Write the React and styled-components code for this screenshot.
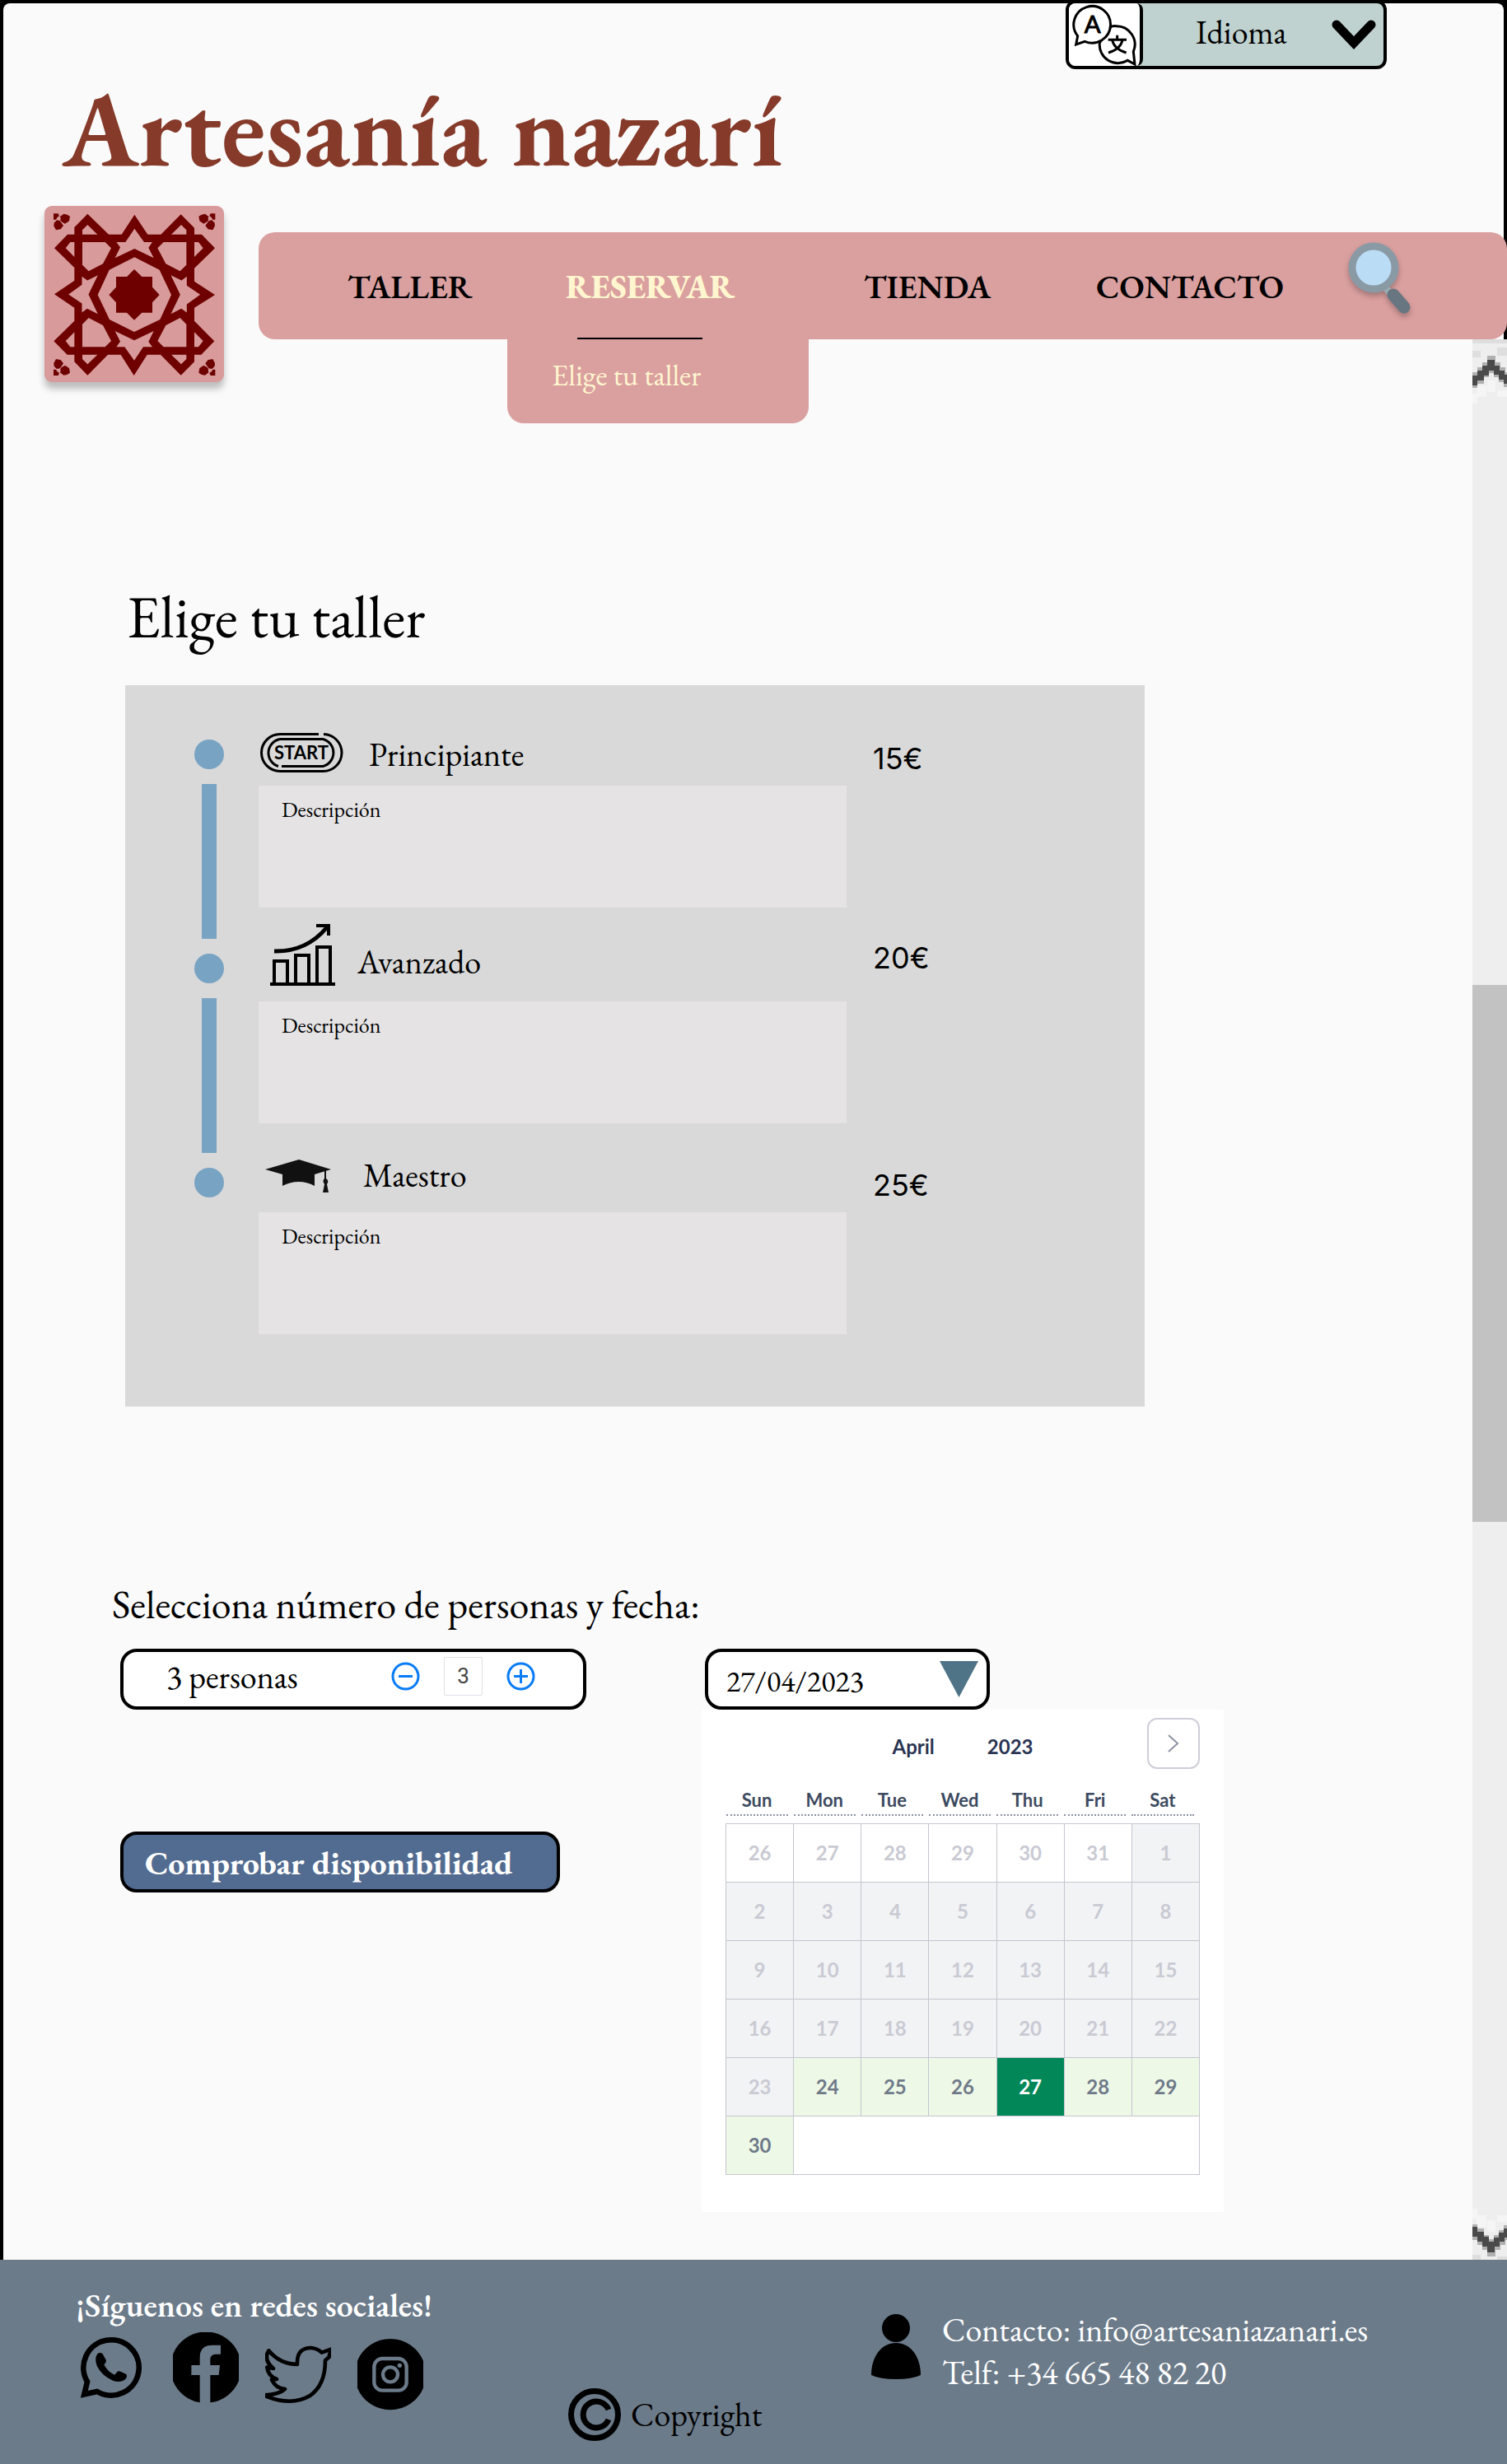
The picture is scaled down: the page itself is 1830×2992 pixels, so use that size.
import React, { useState } from "react";
import styled, { createGlobalStyle } from "styled-components";

const serif = `"EB Garamond", "Liberation Serif", serif`;
const sans = `Inter, "Liberation Sans", sans-serif`;
const geometric = `Lato, "Liberation Sans", sans-serif`;

const GlobalStyle = createGlobalStyle`
  *, *::before, *::after { box-sizing: border-box; }
  body { margin: 0; background: #000; color: #000; font-family: ${serif}; font-size: 40px; }
  h1, h2, p, ul { margin: 0; padding: 0; font-weight: 400; }
  ul { list-style: none; }
  a { color: inherit; text-decoration: none; }
  button, input, select { font: inherit; color: inherit; }
  svg { display: block; flex: none; }
`;

const Sheet = styled.div`
  display: flex;
  flex-direction: column;
  min-height: 100vh;
`;

/* ---------- Header ---------- */

const Header = styled.header`
  position: relative;
  z-index: 1;
  display: flex;
  flex-direction: column;
  margin: 4px 4px 0;
  background: #fafafa;
  border-radius: 8px 8px 0 0;
`;

const LanguagePicker = styled.label`
  align-self: flex-end;
  display: flex;
  width: 390px;
  height: 84px;
  margin: -4px 142px 0 0;
  border: 4px solid #000;
  border-radius: 12px;
  background: #bfd2d0;
  overflow: hidden;
`;

const LanguageBadge = styled.span`
  flex: none;
  width: 90px;
  background: #fff;
  border-right: 4px solid #000;
  border-radius: 0 8px 8px 0;
`;

const LanguageField = styled.span`
  flex: 1;
  display: grid;
  align-items: center;
  justify-items: end;
  > * { grid-area: 1 / 1; }
  svg { margin-right: 8px; pointer-events: none; }
`;

const LanguageSelect = styled.select`
  appearance: none;
  width: 100%;
  height: 100%;
  padding: 0 0 6px 64px;
  border: 0;
  background: transparent;
`;

const SiteTitle = styled.h1`
  margin-top: 12px;
  padding-left: 72px;
  color: #863a2a;
  font-size: 128px;
  line-height: 120px;
  font-weight: 700;
`;

const HeaderRow = styled.div`
  display: flex;
  align-items: flex-start;
  gap: 42px;
  margin: 34px -4px 0 50px;
`;

const LogoLink = styled.a`
  flex: none;
  width: 218px;
  height: 214px;
  margin-bottom: -52px;
  border-radius: 9px;
  background: #d89a9a;
  box-shadow: 0 8px 8px rgba(0, 0, 0, 0.25);
`;

const Nav = styled.nav`
  flex: 1;
  height: 130px;
  margin-top: 32px;
  padding-left: 108px;
  background: #da9f9f;
  border-radius: 20px;
`;

const NavList = styled.ul`
  display: grid;
  grid-template-columns: 265fr 362fr 282fr 305fr 194fr;
  height: 100%;
`;

const NavItem = styled.li`
  position: relative;
  display: flex;
  align-items: center;
  padding-top: 2px;
  font-weight: ${(p) => (p.$current ? 800 : 600)};
  color: ${(p) => (p.$current ? "#fff6cf" : "#000")};
`;

const CurrentMark = styled.span`
  position: absolute;
  left: 14px;
  bottom: 0;
  width: 152px;
  height: 2px;
  background: #000;
`;

const SubMenu = styled.ul`
  position: absolute;
  top: 100%;
  left: -71px;
  z-index: 2;
  width: 366px;
  height: 102px;
  padding: 22px 54px;
  border-radius: 0 0 20px 20px;
  background: #da9f9f;
  font-size: 36px;
  line-height: 44px;
  font-weight: 400;
`;

const SearchButton = styled.button`
  padding: 0;
  border: 0;
  background: none;
  align-self: flex-start;
  margin-top: 10px;
  filter: drop-shadow(0 4px 3px rgba(0, 0, 0, 0.25));
`;

/* ---------- Main ---------- */

const Body = styled.div`
  flex: 1;
  display: flex;
  padding-left: 4px;
`;

const Content = styled.main`
  flex: 1;
  padding: 296px 0 58px;
  background: #fafafa;
`;

const SectionTitle = styled.h2`
  padding-left: 150px;
  font-size: 72px;
  line-height: 80px;
`;

const Panel = styled.div`
  display: grid;
  grid-template-columns: 36px minmax(0, 1fr) 330px;
  margin: 44px 398px 0 148px;
  padding: 48px 0 88px 84px;
  background: #d9d9d9;
`;

const Timeline = styled.div`
  display: flex;
  flex-direction: column;
  align-items: center;
  gap: 18px;
  padding-top: 18px;
`;

const Dot = styled.span`
  width: 36px;
  height: 36px;
  border-radius: 50%;
  background: #79a3c3;
`;

const Bar = styled.span`
  width: 18px;
  height: 188px;
  background: #79a3c3;
`;

const Levels = styled.ul`
  display: flex;
  flex-direction: column;
  gap: 20px;
  padding: 0 32px 0 42px;
`;

const LevelHead = styled.div`
  display: flex;
  align-items: center;
`;

const LevelName = styled.span`
  padding-bottom: 2px;
`;

const Description = styled.p`
  height: 148px;
  padding: 12px 28px;
  background: #e5e3e4;
  font-size: 26px;
  line-height: 34px;
`;

const Prices = styled.ul`
  display: grid;
  grid-template-rows: 242px 276px auto;
  align-content: start;
  padding-top: 18px;
  font-family: ${sans};
  font-size: 36px;
  line-height: 46px;
`;

const BookingTitle = styled.h2`
  margin-top: 214px;
  padding-left: 132px;
  font-size: 48px;
  line-height: 52px;
`;

const Booking = styled.form`
  display: grid;
  grid-template-columns: 566px 634px;
  column-gap: 140px;
  margin-top: 28px;
  padding-left: 142px;
`;

const BookingColumn = styled.div`
  display: flex;
  flex-direction: column;
  align-items: flex-start;
  gap: ${(p) => p.$gap}px;
`;

const Field = styled.div`
  display: flex;
  align-items: center;
  width: ${(p) => p.$width}px;
  height: 74px;
  margin-left: ${(p) => (p.$inset ? 4 : 0)}px;
  padding: ${(p) => p.$padding};
  border: 4px solid #000;
  border-radius: 20px;
  background: #fff;
`;

const PeopleLabel = styled.label`
  flex: 1;
  padding-bottom: 6px;
`;

const Stepper = styled.div`
  display: flex;
  align-items: center;
  gap: 29px;
  padding-bottom: 8px;
`;

const IconButton = styled.button`
  padding: 0;
  border: 0;
  background: none;
`;

const CountInput = styled.input`
  width: 47px;
  height: 47px;
  padding: 0;
  border: 1px solid #dfe1e5;
  border-radius: 2px;
  background: #fff;
  color: #444;
  font-family: Roboto, sans-serif;
  font-size: 26px;
  text-align: center;
`;

const DateInput = styled.input`
  flex: 1;
  min-width: 0;
  height: 100%;
  padding: 4px 0 0;
  border: 0;
  background: transparent;
  font-size: 36px;
`;

const SubmitButton = styled.button`
  width: 534px;
  height: 74px;
  padding: 2px 26px 0;
  border: 4px solid #000;
  border-radius: 20px;
  background: #526b90;
  color: #fff;
  font-weight: 700;
  text-align: left;
`;

const Calendar = styled.section`
  width: 100%;
  padding: 10px 29px 45px;
  background: #fff;
  font-family: ${geometric};
  font-size: 24px;
`;

const CalendarHead = styled.div`
  display: grid;
  grid-template-columns: 1fr auto auto 1fr;
  column-gap: 64px;
  height: 64px;
  color: #2a3553;
  font-weight: 700;
  line-height: 70px;
  > :first-child { grid-column: 2; }
`;

const NextButton = styled.button`
  justify-self: end;
  display: grid;
  place-items: center;
  width: 64px;
  height: 62px;
  padding: 0;
  border: 2px solid #cdced8;
  border-radius: 12px;
  background: #fff;
`;

const Month = styled.table`
  width: 100%;
  table-layout: fixed;
  border-collapse: collapse;
  text-align: center;
`;

const Weekday = styled.th`
  height: 64px;
  padding: 0 7px 9px 0;
  color: #3c4a60;
  font-size: 22px;
  font-weight: 700;
  span {
    display: block;
    height: 55px;
    padding-top: 10px;
    line-height: 52px;
    border-bottom: 2px dotted #8b92a3;
  }
`;

const dayTones = {
  out: { background: "#ffffff", color: "#c9cad3" },
  past: { background: "#f2f3f5", color: "#c9cad3" },
  open: { background: "#eef8e7", color: "#6f7a89" },
  chosen: { background: "#028758", color: "#ffffff" },
};

const Day = styled.td`
  height: 71px;
  padding: 0;
  border: 1px solid #c5c6cf;
  background: ${(p) => dayTones[p.$tone].background};
  color: ${(p) => dayTones[p.$tone].color};
  font-weight: 700;
  line-height: 30px;
`;

const ScrollTrack = styled.div`
  flex: none;
  display: flex;
  flex-direction: column;
  width: 42px;
  background: #eeeeee;
`;

const ScrollThumb = styled.div`
  height: 652px;
  margin-top: 694px;
  margin-bottom: auto;
  background: #c2c2c2;
`;

/* ---------- Footer ---------- */

const Footer = styled.footer`
  display: grid;
  grid-template-columns: 598fr 368fr 772fr;
  height: 248px;
  padding: 33px 0 28px 92px;
  background: #6c7b8a;
`;

const SocialTitle = styled.h2`
  color: #fff;
  font-size: 40px;
  line-height: 44px;
  font-weight: 600;
`;

const SocialList = styled.ul`
  display: flex;
  gap: 32px;
  margin-top: 11px;
  padding-left: 6px;
`;

const Copyright = styled.p`
  align-self: end;
  display: flex;
  align-items: center;
  gap: 12px;
`;

const Contact = styled.address`
  display: flex;
  align-items: flex-start;
  gap: 26px;
  padding-top: 26px;
  color: #fff;
  font-style: normal;
  line-height: 52px;
  svg { margin-top: 7px; }
`;

/* ---------- Drawings ---------- */

const flips = ["", "translate(739 0) scale(-1 1)", "translate(0 706) scale(1 -1)", "translate(739 706) scale(-1 -1)"];

const TileLogo = () => (
  <svg width="218" height="214" viewBox="42 30 654 642" role="img" aria-label="Artesanía nazarí">
    <path
      fill="#6e0000"
      d="M199 59 276 134H323L370 62 418 134H466L539 61 588 110V134H615L663 184 588 257V305L663 354 588 401V449L661 523 613 572H588V598L539 647 465 572H416L368 648 320 572H273L199 647 151 598V572H125L76 523 151 449V401L78 352 151 302V255L78 184 126 134H151V108Z"
    />
    <g fill="#d89a9a">
      {flips.map((t) => (
        <g key={t} transform={t}>
          <path d="M180 134V118L199 99 235 134ZM151 162H136L119 184 151 216ZM180 162H263L285 184 255 241 203 268 180 245Z" />
        </g>
      ))}
      {[0, 90, 180, 270].map((a) => (
        <path
          key={a}
          transform={`rotate(${a} 369.5 353)`}
          d="M370 113 405 162H435L421 182 440 220 370 186 299 220 318 181 304 162H337Z"
        />
      ))}
      <path d="M370 217 461 263 504 354 463 444 369 489 279 444 236 354 278 263Z" />
    </g>
    <path fill="#6e0000" d="M303 288H342L369 261 397 288H435V326L461 354 435 382V419H397L369 446 342 419H303V382L277 354 303 326Z" />
    {flips.map((t) => (
      <g key={t} transform={t} fill="#6e0000">
        <path d="M75 58H92L96 67 88 73 84 80H75ZM99 69 112 59Q126 60 135 68L132 85 117 95 104 88 97 77ZM87 82 98 84 104 92 111 102 101 115 84 118 76 103 77 92Z" />
        <circle cx="95" cy="76" r="6" fill="#d89a9a" />
      </g>
    ))}
  </svg>
);

const TranslateIcon = () => (
  <svg width="86" height="76" viewBox="24 12 258 228" aria-hidden="true">
    <g fill="#fff" stroke="#000" strokeWidth="9" strokeLinejoin="miter">
      <path d="M179 96A67 67 0 0 1 196 95 67 67 0 0 1 259 188L264 234 238 220A67 67 0 0 1 136 156Z" />
      <path d="M50 162 56 131A67 67 0 1 1 82 151Z" />
    </g>
    <text x="110" y="120" textAnchor="middle" fontFamily="Lato, sans-serif" fontSize="88" stroke="#000" strokeWidth="3">A</text>
    <g fill="none" stroke="#000" strokeWidth="9">
      <path d="M167 145H234M200 128V145M182 147Q190 180 233 192M219 147Q211 180 168 192" />
    </g>
  </svg>
);

const ChevronDown = () => (
  <svg width="56" height="38" viewBox="0 0 56 38" aria-hidden="true">
    <path d="M7 7 28 29 49 7" fill="none" stroke="#000" strokeWidth="11" strokeLinecap="round" />
  </svg>
);

const SearchIcon = () => (
  <svg width="78" height="88" viewBox="0 0 78 88" aria-hidden="true">
    <path d="M45 54 54 64" stroke="#9aaab2" strokeWidth="8" />
    <path d="M56 64 69 79" stroke="#677681" strokeWidth="15" strokeLinecap="round" />
    <circle cx="32" cy="31" r="26" fill="#bbdcf5" stroke="#8a9aa5" strokeWidth="9" />
  </svg>
);

const StartIcon = () => (
  <svg width="134" height="74" viewBox="0 0 134 74" aria-hidden="true">
    <g fill="none" stroke="#000" strokeWidth="3">
      <path d="M73 11.500H26A22.500 22.500 0 0 0 26 56.500H78A22.500 22.500 0 0 0 79 11.500" />
      <path d="M28 50.500H78A17 17 0 0 0 78 17.500H26A17 17 0 0 0 24 50.500" />
    </g>
    <text x="52" y="42" textAnchor="middle" fontFamily="Lato, sans-serif" fontWeight="700" fontSize="22">START</text>
  </svg>
);

const GrowthIcon = () => (
  <svg width="120" height="94" viewBox="0 0 120 94" aria-hidden="true">
    <path d="M14 73H93" stroke="#000" strokeWidth="4" />
    <g fill="none" stroke="#000" strokeWidth="4">
      <path d="M19 72V45H35V72M45 72V38H61V72M71 72V28H87V72" />
      <path d="M19 33Q58 34 83 4" strokeWidth="5" />
      <path d="M70 2H85V14" />
    </g>
  </svg>
);

const CapIcon = () => (
  <svg width="127" height="88" viewBox="0 0 127 88" aria-hidden="true" fill="#111">
    <path d="M8 36 49 24 88 36 68 42V56Q49 46 29 56V42Z" />
    <path d="M80 38H82V47Q86 50 83 54L85 64H78L80 54Q77 50 80 47Z" />
  </svg>
);

const StepIcon = ({ plus }) => (
  <svg width="35" height="35" viewBox="0 0 35 35" fill="none" stroke="#0a7cf5" strokeWidth="3" aria-hidden="true">
    <circle cx="17.500" cy="17.500" r="15.500" />
    <path d={plus ? "M9 17.500H26M17.500 9V26" : "M9 17.500H26"} />
  </svg>
);

const Triangle = () => (
  <svg width="47" height="44" viewBox="0 0 47 44" aria-hidden="true">
    <path d="M0 0H47L23.500 44Z" fill="#4f7387" />
  </svg>
);

const ScrollArrow = ({ down }) => (
  <svg width="42" height="90" viewBox="0 0 42 90" aria-hidden="true" shapeRendering="crispEdges">
    <g transform={down ? "translate(0 106) scale(1 -1)" : undefined}>
      <path fill="#dedede" d="M0 0H42V5H0ZM0 14H10V22H0ZM30 10H42V20H30Z" />
      <path fill="#f5f5f5" d="M5 56H17V70H5ZM18 50H28V64H18ZM0 66H6V78H0ZM30 62H42V70H30Z" />
      <path fill="#b0b0b0" d="M0 40H6V34H12V28H18V20H28V28H34V34H40V40H42V58H38V52H32V46H26V41H20V46H14V54H6V59H0Z" />
      <path fill="#4a4a4a" d="M0 44H6V38H12V32H18V25H27V32H33V38H39V43H42V54H38V49H32V43H26V38H20V44H14V50H6V56H0Z" />
    </g>
  </svg>
);

const WhatsAppIcon = () => (
  <svg width="80" height="94" viewBox="24 36 240 282" aria-hidden="true">
    <path d="M37 262 48 216A101 101 0 1 1 84 252Z" fill="none" stroke="#000" strokeWidth="20" />
    <path d="M85 115Q92 108 103 113L117 139Q117 147 109 154 122 180 147 191L160 178Q165 176 191 190 195 202 182 211 165 221 141 212 100 194 83 158 73 131 85 115Z" />
  </svg>
);

const FacebookIcon = () => (
  <svg width="80" height="94" viewBox="360 36 240 282" aria-hidden="true">
    <path d="M458 292A129 129 0 0 1 360 213V116A129 129 0 0 1 600 116V213A129 129 0 0 1 496 292V192H527L531 156H496V136Q496 116 516 116H534V83H505Q458 83 458 128V156H427V192H458Z" />
  </svg>
);

const TwitterIcon = () => (
  <svg width="80" height="94" viewBox="696 36 240 282" aria-hidden="true">
    <path
      d="M709 103Q750 153 813 153 810 92 864 93 886 95 902 110L938 97 930 118 938 118 915 139Q915 230 858 268 790 308 690 265 745 264 768 243 735 240 720 209L738 207Q706 194 703 164L726 168Q688 136 709 103Z"
      fill="none"
      stroke="#000"
      strokeWidth="14"
      strokeLinejoin="round"
    />
  </svg>
);

const InstagramIcon = () => (
  <svg width="80" height="95" viewBox="1032 36 240 285" aria-hidden="true">
    <path d="M1032 140A130 130 0 0 1 1272 140V239A130 130 0 0 1 1032 239Z" />
    <g fill="none" stroke="#6c7b8a" strokeWidth="13">
      <rect x="1093" y="132" width="118" height="116" rx="30" />
      <circle cx="1152" cy="190" r="27" />
    </g>
    <circle cx="1186" cy="157" r="8" fill="#6c7b8a" />
  </svg>
);

const CopyrightIcon = () => (
  <svg width="64" height="64" viewBox="0 0 64 64" fill="none" stroke="#000" aria-hidden="true">
    <circle cx="32" cy="32" r="28.500" strokeWidth="7" />
    <path d="M49 26A16 16 0 1 0 49 38" strokeWidth="7" />
  </svg>
);

const PersonIcon = () => (
  <svg width="60" height="79" viewBox="0 0 60 79" aria-hidden="true">
    <circle cx="30" cy="17" r="17" />
    <path d="M30 35C48 35 60 52 60 74Q50 79 30 79T0 74C0 52 12 35 30 35Z" />
  </svg>
);

/* ---------- Data ---------- */

const levels = [
  { name: "Principiante", price: "15€", Icon: StartIcon },
  { name: "Avanzado", price: "20€", Icon: GrowthIcon },
  { name: "Maestro", price: "25€", Icon: CapIcon },
];

const socials = [
  { name: "WhatsApp", Icon: WhatsAppIcon },
  { name: "Facebook", Icon: FacebookIcon },
  { name: "Twitter", Icon: TwitterIcon },
  { name: "Instagram", Icon: InstagramIcon },
];

const weekdays = ["Sun", "Mon", "Tue", "Wed", "Thu", "Fri", "Sat"];

const leading = [26, 27, 28, 29, 30, 31].map((day) => ({ day, tone: "out" }));
const april = Array.from({ length: 30 }, (_, i) => {
  const day = i + 1;
  return { day, tone: day === 27 ? "chosen" : day < 24 ? "past" : "open" };
});
const days = [...leading, ...april];
const weeks = Array.from({ length: 6 }, (_, i) => days.slice(i * 7, i * 7 + 7));

export default function App() {
  const [people, setPeople] = useState(3);

  return (
    <Sheet>
      <GlobalStyle />
      <Header>
        <LanguagePicker>
          <LanguageBadge>
            <TranslateIcon />
          </LanguageBadge>
          <LanguageField>
            <LanguageSelect aria-label="Idioma">
              <option>Idioma</option>
            </LanguageSelect>
            <ChevronDown />
          </LanguageField>
        </LanguagePicker>
        <SiteTitle>Artesanía nazarí</SiteTitle>
        <HeaderRow>
          <LogoLink href="#inicio">
            <TileLogo />
          </LogoLink>
          <Nav>
            <NavList>
              <NavItem><a href="#taller">TALLER</a></NavItem>
              <NavItem $current>
                <a href="#reservar">RESERVAR</a>
                <CurrentMark />
                <SubMenu>
                  <li><a href="#elige">Elige tu taller</a></li>
                </SubMenu>
              </NavItem>
              <NavItem><a href="#tienda">TIENDA</a></NavItem>
              <NavItem><a href="#contacto">CONTACTO</a></NavItem>
              <NavItem>
                <SearchButton type="button" aria-label="Buscar">
                  <SearchIcon />
                </SearchButton>
              </NavItem>
            </NavList>
          </Nav>
        </HeaderRow>
      </Header>

      <Body>
        <Content>
          <SectionTitle id="elige">Elige tu taller</SectionTitle>
          <Panel>
            <Timeline>
              <Dot />
              <Bar />
              <Dot />
              <Bar />
              <Dot />
            </Timeline>
            <Levels>
              {levels.map(({ name, Icon }) => (
                <li key={name}>
                  <LevelHead>
                    <Icon />
                    <LevelName>{name}</LevelName>
                  </LevelHead>
                  <Description>Descripción</Description>
                </li>
              ))}
            </Levels>
            <Prices>
              {levels.map(({ name, price }) => (
                <li key={name}>{price}</li>
              ))}
            </Prices>
          </Panel>

          <BookingTitle>Selecciona número de personas y fecha:</BookingTitle>
          <Booking onSubmit={(e) => e.preventDefault()}>
            <BookingColumn $gap={148}>
              <Field $width={566} $padding="0 58px 0 52px">
                <PeopleLabel htmlFor="people">{people} personas</PeopleLabel>
                <Stepper>
                  <IconButton type="button" aria-label="Menos" onClick={() => setPeople(Math.max(1, people - 1))}>
                    <StepIcon />
                  </IconButton>
                  <CountInput id="people" value={people} readOnly />
                  <IconButton type="button" aria-label="Más" onClick={() => setPeople(people + 1)}>
                    <StepIcon plus />
                  </IconButton>
                </Stepper>
              </Field>
              <SubmitButton type="submit">Comprobar disponibilidad</SubmitButton>
            </BookingColumn>

            <BookingColumn $gap={0}>
              <Field $width={346} $inset $padding="0 10px 0 22px">
                <DateInput aria-label="Fecha" defaultValue="27/04/2023" />
                <IconButton type="button" aria-label="Abrir calendario">
                  <Triangle />
                </IconButton>
              </Field>
              <Calendar>
                <CalendarHead>
                  <span>April</span>
                  <span>2023</span>
                  <NextButton type="button" aria-label="Next">
                    <svg width="16" height="24" viewBox="0 0 16 24" fill="none" stroke="#8d93a5" strokeWidth="2">
                      <path d="M2 2 13 12 2 22" />
                    </svg>
                  </NextButton>
                </CalendarHead>
                <Month>
                  <thead>
                    <tr>
                      {weekdays.map((d) => (
                        <Weekday key={d} scope="col"><span>{d}</span></Weekday>
                      ))}
                    </tr>
                  </thead>
                  <tbody>
                    {weeks.map((week, i) => (
                      <tr key={i}>
                        {week.map(({ day, tone }) => (
                          <Day key={day} $tone={tone}>{day}</Day>
                        ))}
                        {week.length < 7 && <Day $tone="out" colSpan={7 - week.length} />}
                      </tr>
                    ))}
                  </tbody>
                </Month>
              </Calendar>
            </BookingColumn>
          </Booking>
        </Content>
        <ScrollTrack aria-hidden="true">
          <ScrollArrow />
          <ScrollThumb />
          <ScrollArrow down />
        </ScrollTrack>
      </Body>

      <Footer>
        <div>
          <SocialTitle>¡Síguenos en redes sociales!</SocialTitle>
          <SocialList>
            {socials.map(({ name, Icon }) => (
              <li key={name}>
                <a href={`#${name.toLowerCase()}`} aria-label={name}><Icon /></a>
              </li>
            ))}
          </SocialList>
        </div>
        <Copyright>
          <CopyrightIcon />
          Copyright
        </Copyright>
        <Contact>
          <PersonIcon />
          <div>
            <p>Contacto: <a href="mailto:info@artesaniazanari.es">info@artesaniazanari.es</a></p>
            <p>Telf: <a href="tel:+34665488220">+34 665 48 82 20</a></p>
          </div>
        </Contact>
      </Footer>
    </Sheet>
  );
}
